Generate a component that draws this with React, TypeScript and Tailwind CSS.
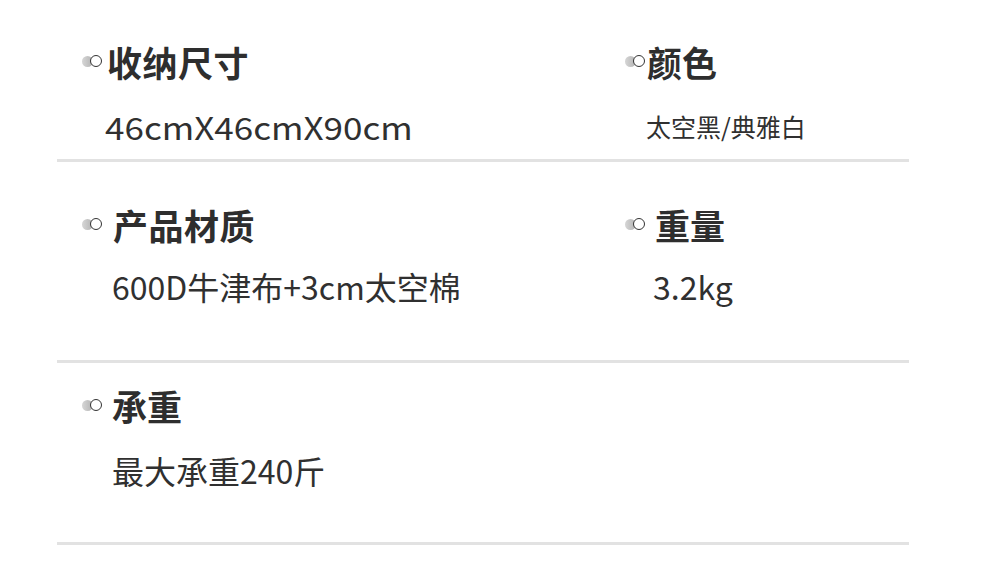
const font = { fontFamily: '"Noto Sans CJK SC", "Noto Sans", sans-serif' };

function Bullet() {
  return (
    <span className="relative inline-block h-[12px] w-[20px] shrink-0">
      <span className="absolute left-0 top-[0.5px] h-[11px] w-[11px] rounded-full bg-gradient-to-r from-[#d6d6d6] to-[#b3b3b3]" />
      <span className="absolute left-[8px] top-0 h-[12px] w-[12px] rounded-full border-[1.5px] border-[#333333] bg-white" />
    </span>
  );
}

function Line() {
  return <div className="mx-[57px] h-[3px] w-[852px] bg-[#e2e2e2]" />;
}

export default function App() {
  return (
    <div className="h-[579px] w-[1000px] bg-white text-[#303030]" style={font}>
      {/* section 1 */}
      <div className="flex pt-[41px]">
        <div className="w-[625px] pl-[82px]">
          <div className="flex h-[40px] items-center gap-[5px]">
            <Bullet />
            <span className="text-[35px] font-bold leading-none tracking-[0.5px] text-[#2e2e2e]">收纳尺寸</span>
          </div>
          <div className="mt-[25px] flex h-[40px] items-center pl-[23px]">
            <span className="inline-block origin-left scale-x-[1.13] text-[31px] leading-none">
              46cmX46cmX90cm
            </span>
          </div>
        </div>
        <div className="flex-1">
          <div className="flex h-[40px] items-center gap-[2px]">
            <Bullet />
            <span className="text-[35px] font-bold leading-none text-[#2e2e2e]">颜色</span>
          </div>
          <div className="mt-[25px] flex h-[40px] items-center pl-[21px] text-[25px] leading-none">
            太空黑/典雅白
          </div>
        </div>
      </div>
      <div className="mt-[13px]">
        <Line />
      </div>

      {/* section 2 */}
      <div className="flex pt-[42px]">
        <div className="w-[625px] pl-[82px]">
          <div className="flex h-[40px] items-center gap-[11px]">
            <Bullet />
            <span className="text-[35px] font-bold leading-none tracking-[0.5px] text-[#2e2e2e]">产品材质</span>
          </div>
          <div className="mt-[22px] flex h-[40px] items-center pl-[30px] text-[32px] leading-none">
            600D牛津布+3cm太空棉
          </div>
        </div>
        <div className="flex-1">
          <div className="flex h-[40px] items-center gap-[10px]">
            <Bullet />
            <span className="text-[35px] font-bold leading-none text-[#2e2e2e]">重量</span>
          </div>
          <div className="mt-[22px] flex h-[40px] items-center pl-[28px] text-[32px] leading-none">
            3.2kg
          </div>
        </div>
      </div>
      <div className="mt-[54px]">
        <Line />
      </div>

      {/* section 3 */}
      <div className="flex pt-[22px]">
        <div className="w-[625px] pl-[82px]">
          <div className="flex h-[40px] items-center gap-[10px]">
            <Bullet />
            <span className="text-[35px] font-bold leading-none text-[#2e2e2e]">承重</span>
          </div>
          <div className="mt-[25px] flex h-[40px] items-center pl-[30px] text-[32px] leading-none">
            最大承重240斤
          </div>
        </div>
      </div>
      <div className="mt-[52px]">
        <Line />
      </div>
    </div>
  );
}
